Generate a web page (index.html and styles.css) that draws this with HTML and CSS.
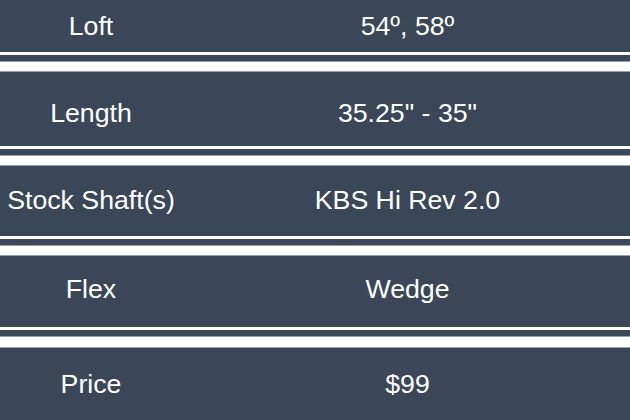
FILE: index.html
```html
<!DOCTYPE html>
<html>
<head>
<meta charset="utf-8">
<link rel="stylesheet" href="styles.css">
</head>
<body>
<div class="specs">
  <div class="row r1"><div class="label">Loft</div><div class="value">54º, 58º</div></div>
  <div class="sep"></div>
  <div class="row r2"><div class="label">Length</div><div class="value">35.25" - 35"</div></div>
  <div class="sep"></div>
  <div class="row r3"><div class="label">Stock Shaft(s)</div><div class="value">KBS Hi Rev 2.0</div></div>
  <div class="sep"></div>
  <div class="row r4"><div class="label">Flex</div><div class="value">Wedge</div></div>
  <div class="sep sep-wide"></div>
  <div class="row r5"><div class="label">Price</div><div class="value">$99</div></div>
</div>
</body>
</html>
```

FILE: styles.css
```css
html, body {
  margin: 0;
  padding: 0;
  background: #ffffff;
}
.specs {
  width: 630px;
  height: 420px;
  display: flex;
  flex-direction: column;
  font-family: "Liberation Sans", Arial, sans-serif;
  font-size: 26.7px;
  color: #ffffff;
  overflow: hidden;
}
.row {
  background: #3a4759;
  display: grid;
  grid-template-columns: 182px 1fr;
  align-items: center;
  box-sizing: border-box;
}
.label, .value {
  text-align: center;
  white-space: nowrap;
}
.value { padding-left: 3px; }
.r1 { height: 52px; }
.r2 { height: 74px; padding-top: 9px; }
.r3 { height: 70px; padding-bottom: 1px; }
.r4 { height: 71px; padding-bottom: 4px; }
.r5 { height: 72px; }
.sep {
  height: 20px;
  display: flex;
  flex-direction: column;
  flex-shrink: 0;
  background: #ffffff;
}
.sep::before {
  content: "";
  display: block;
  height: 6px;
  margin-top: 3px;
  background: #3a4759;
  border-bottom: 1px solid #9aa0a8;
}
.sep::after {
  content: "";
  display: block;
  height: 9px;
  border-bottom: 1px solid #9aa0a8;
}
.sep-wide { height: 21px; }
.sep-wide::after { height: 10px; }
```
